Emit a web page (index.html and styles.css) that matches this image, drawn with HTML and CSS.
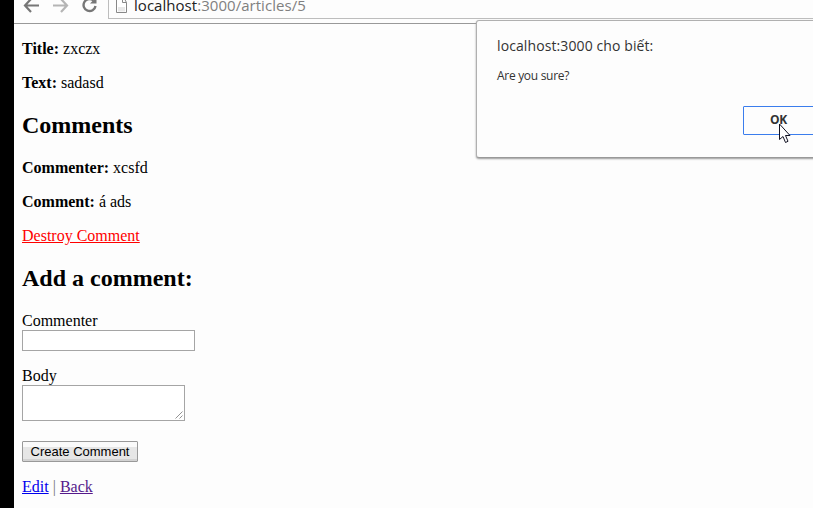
FILE: index.html
```html
<!DOCTYPE html>
<html lang="vi">
<head>
<meta charset="utf-8">
<title>Article</title>
<link rel="stylesheet" href="styles.css">
</head>
<body>
<div class="window">
  <header class="toolbar">
    <svg class="nav" width="94" height="14" viewBox="0 0 94 14" fill="none">
      <path d="M25 5.500H11M17-1L11 5.500L17 12" stroke="#777" stroke-width="2.2"/>
      <path d="M39 5.500H53M47-1L53 5.500L47 12" stroke="#b5b5b5" stroke-width="2.2"/>
      <path d="M79.500 0.500A6 6 0 1 0 81.500 6" stroke="#777" stroke-width="2.400"/>
      <path d="M76 3.500H82.500V-3Z" fill="#777"/>
    </svg>
    <div class="address">
      <svg class="doc" width="12" height="13" viewBox="0 0 12 13"><path d="M.5-3H7.500L10.500 2.500V12.500H.5ZM6.500-1V2.500H10.500" fill="#fff" stroke="#888"/><path d="M2 7H9V11.500H2Z" fill="#e8e8e8"/></svg>
      <span class="url"><span class="host">localhost</span>:3000/articles/5</span>
    </div>
  </header>
  <main class="page">
    <p><b>Title:</b> zxczx</p>
    <p><b>Text:</b> sadasd</p>
    <h2>Comments</h2>
    <p><b>Commenter:</b> xcsfd</p>
    <p><b>Comment:</b> á ads</p>
    <p><a class="destroy" href="#">Destroy Comment</a></p>
    <h2>Add a comment:</h2>
    <form>
      <p><label for="commenter">Commenter</label><input id="commenter" type="text"></p>
      <p><label for="body">Body</label><span class="area"><textarea id="body"></textarea><svg class="grip" width="8" height="8" viewBox="0 0 8 8"><path d="M.5 7.500L7.500 .5M4.500 7.500L7.500 4.500" stroke="#777" stroke-width=".8"/></svg></span></p>
      <p class="submit"><button type="button">Create Comment</button></p>
    </form>
    <p class="links"><a href="#">Edit</a> | <a class="visited" href="#">Back</a></p>
  </main>
</div>
<div class="dialog">
  <div class="dialog-title">localhost:3000 cho biết:</div>
  <div class="dialog-text">Are you sure?</div>
  <div class="ok">OK</div>
</div>
<svg class="cursor" width="13" height="21" viewBox="0 0 13 21"><path d="M1.500 1V16.500L5 13.500L7.500 19.500L10 18.300L7.500 12.500H12Z" fill="#fff" stroke="#112" stroke-width="1"/></svg>
</body>
</html>
```
FILE: styles.css
```css
* { box-sizing: border-box; }
body {
  margin: 0;
  height: 508px;
  overflow: hidden;
  position: relative;
  background: #000;
  font: 16px/18px "Liberation Serif", serif;
  color: #000;
}
.window { margin-left: 14px; height: 508px; background: #fdfdfd; }
.toolbar {
  display: flex;
  align-items: flex-start;
  height: 24px;
  border-bottom: 1px solid #999;
}
.nav { flex: none; }
.address {
  flex: 1;
  display: flex;
  height: 19px;
  border: solid #bdbdbd;
  border-width: 0 0 1px 1px;
  padding-left: 7px;
}
.doc { flex: none; }
.url {
  margin: -5px 0 0 6px;
  font: 15px/20px "Open Sans", sans-serif;
  letter-spacing: 0.04px;
  color: #808080;
  white-space: nowrap;
}
.host { color: #222; }
.page { padding: 16px 8px 0; }
p { margin: 0 0 16px; }
h2 { margin: 20px 0; font-size: 24px; line-height: 27px; }
label { display: block; }
a { color: #0000ee; }
.visited { color: #551a8b; }
.destroy { color: #f00; }
input, textarea {
  display: block;
  margin: 0;
  padding: 0;
  border: 1px solid #a5a5a5;
  background: #fff;
  outline: none;
}
input { width: 173px; height: 21px; }
.area { display: block; position: relative; width: 163px; }
textarea { width: 163px; height: 36px; resize: none; }
.grip { position: absolute; right: 2px; bottom: 2px; }
.submit { margin-top: 20px; }
button {
  display: block;
  width: 116px;
  height: 21px;
  padding: 0;
  border: 1px solid #999;
  border-radius: 1px;
  background: linear-gradient(#fafafa 0 5px, #e6e6e6 5px 17px, #d2d2d2 17px);
  font: 13px/17px "Liberation Sans", sans-serif;
  color: #000;
}
.links { color: #777; }
.dialog {
  position: absolute;
  left: 476px;
  top: 20px;
  width: 360px;
  height: 138px;
  padding: 15px 20px;
  border: 1px solid #b0b0b0;
  border-bottom-color: #999;
  border-radius: 3px;
  box-shadow: 0 1px 2px #999;
  background: #fdfdfd;
  font-family: "Open Sans", sans-serif;
  color: #333;
  white-space: nowrap;
}
.dialog-title { font-size: 14px; line-height: 20px; letter-spacing: 0.1px; }
.dialog-text { margin-top: 12px; font-size: 12px; line-height: 16px; letter-spacing: -0.3px; }
.ok {
  width: 90px;
  height: 29px;
  margin: 22px 0 0 246px;
  padding-left: 26px;
  border: 1px solid #3b7ded;
  border-radius: 1px;
  font-size: 12px;
  font-weight: 700;
  line-height: 26px;
  letter-spacing: -0.4px;
}
.cursor { position: absolute; left: 778px; top: 123px; }
```
